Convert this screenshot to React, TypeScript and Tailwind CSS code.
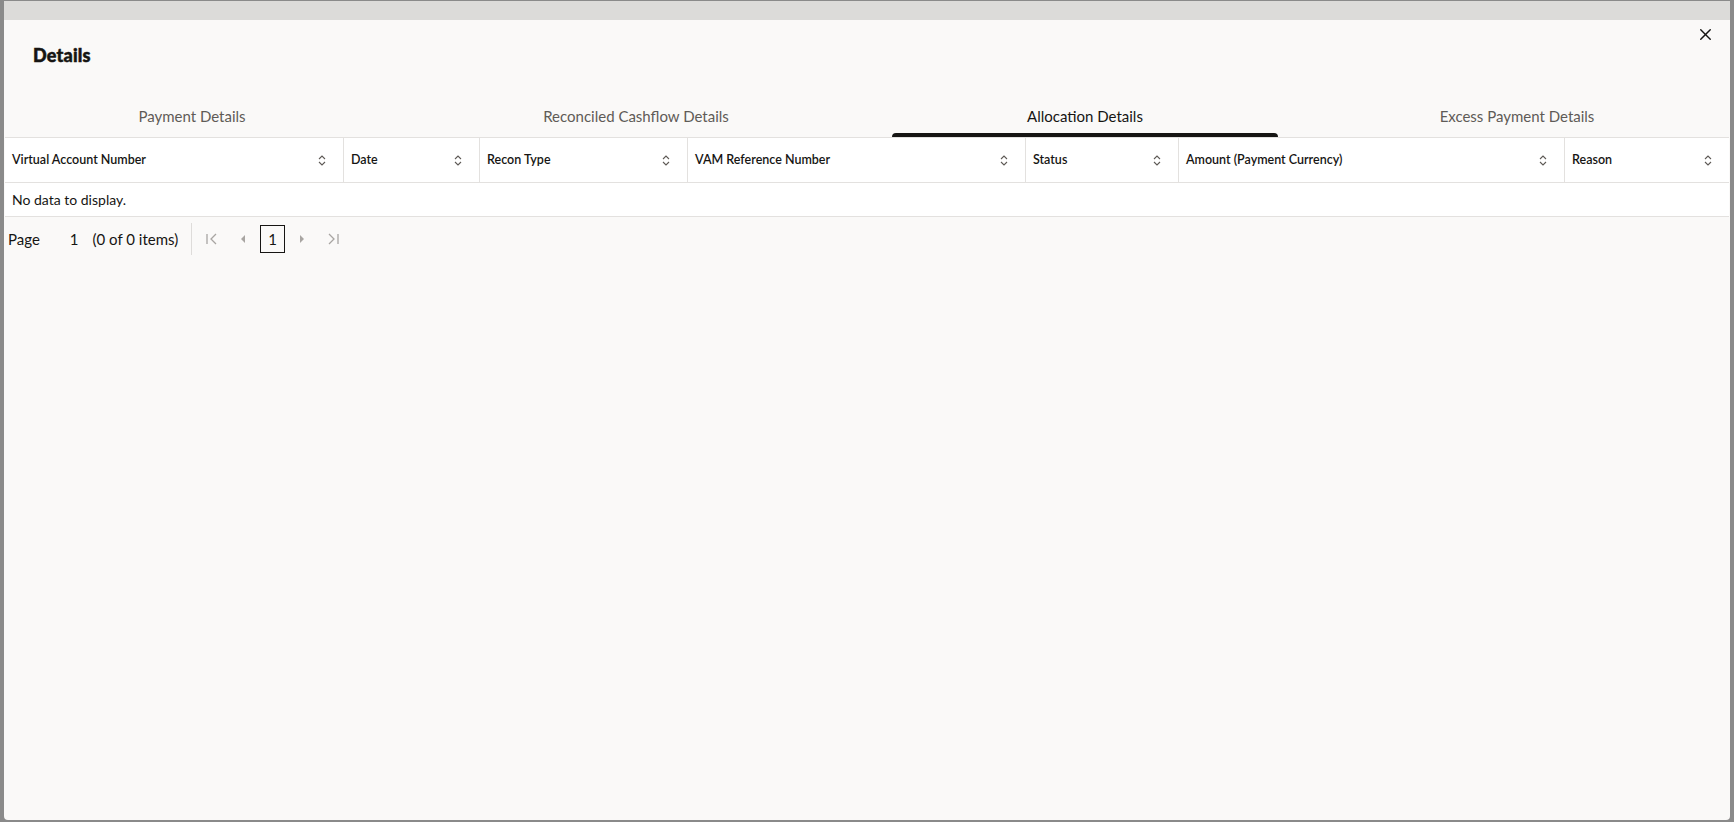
import { X } from "lucide-react";

const tabs = [
	{ label: "Payment Details", width: "w-[376px]", active: false },
	{ label: "Reconciled Cashflow Details", width: "w-[512px]", active: false },
	{ label: "Allocation Details", width: "w-[386px]", active: true },
	{ label: "Excess Payment Details", width: "w-[478px]", active: false },
];

const columns = [
	{ label: "Virtual Account Number", width: "w-[339px]" },
	{ label: "Date", width: "w-[136px]" },
	{ label: "Recon Type", width: "w-[208px]" },
	{ label: "VAM Reference Number", width: "w-[338px]" },
	{ label: "Status", width: "w-[153px]" },
	{ label: "Amount (Payment Currency)", width: "w-[386px]" },
	{ label: "Reason", width: "flex-1" },
];

function SortIcon() {
	return (
		<svg width="8" height="11" viewBox="0 0 8 11" fill="none" className="shrink-0">
			<path d="M1 4 L4 1 L7 4" stroke="#5f5b57" strokeWidth="1.1" />
			<path d="M1 7 L4 10 L7 7" stroke="#5f5b57" strokeWidth="1.1" />
		</svg>
	);
}

function Pager() {
	return (
		<div className="flex h-[44px] items-center text-[15px] text-[#161513]">
			<span className="ml-[4px]">Page</span>
			<span className="ml-[30px]">1</span>
			<span className="ml-[14px]">(0 of 0 items)</span>
			<span className="ml-[13px] h-[32px] w-px bg-[#dedcda]" />
			<div className="ml-[13px] flex items-center">
				<svg width="14" height="14" viewBox="0 0 14 14" fill="none">
					<path d="M2 2 V12" stroke="#a8a5a2" strokeWidth="1.3" />
					<path d="M11 2 L6 7 L11 12" stroke="#a8a5a2" strokeWidth="1.3" />
				</svg>
				<svg width="12" height="12" viewBox="0 0 12 12" className="ml-[18px]">
					<path d="M8 2 L4 6 L8 10 Z" fill="#a8a5a2" />
				</svg>
				<span className="ml-[11px] flex h-[28px] w-[25px] items-center justify-center border border-[#161513] text-[15px]">
					1
				</span>
				<svg width="12" height="12" viewBox="0 0 12 12" className="ml-[11px]">
					<path d="M4 2 L8 6 L4 10 Z" fill="#a8a5a2" />
				</svg>
				<svg width="14" height="14" viewBox="0 0 14 14" fill="none" className="ml-[18px]">
					<path d="M3 2 L8 7 L3 12" stroke="#a8a5a2" strokeWidth="1.3" />
					<path d="M12 2 V12" stroke="#a8a5a2" strokeWidth="1.3" />
				</svg>
			</div>
		</div>
	);
}

export default function App() {
	return (
		<div
			className="flex h-[822px] w-[1734px] flex-col overflow-hidden bg-[#8a8a8a] px-[4px] pb-[2px] pt-px"
			style={{ fontFamily: "Lato, 'Noto Sans', sans-serif" }}
		>
			<div className="h-[19px] shrink-0 bg-[#dcdbd9]" />
			<div className="relative flex flex-1 flex-col overflow-hidden rounded-b-[4px] bg-[#faf9f8]">
				<button className="absolute right-[15px] top-[5px] text-[#161513]">
					<X size={19} strokeWidth={1.8} />
				</button>
				<div className="h-[78px] shrink-0 pl-[29px] pt-[22px]">
					<h1 className="text-[18px] font-black tracking-[0.2px] text-[#161513] [-webkit-text-stroke:0.5px_#161513]">
						Details
					</h1>
				</div>
				<div className="flex h-[39px] shrink-0">
					{tabs.map((tab) => (
						<div
							key={tab.label}
							className={`relative flex shrink-0 items-start justify-center pt-[7px] text-[15px] ${tab.width} ${
								tab.active ? "text-[#161513]" : "text-[#5f5b57]"
							}`}
						>
							{tab.label}
							{tab.active && (
								<span className="absolute bottom-0 left-0 right-0 h-[4px] rounded-t-[4px] bg-[#161513]" />
							)}
						</div>
					))}
				</div>
				<div className="mx-px border-t border-[#e3e1df] bg-white">
					<div className="flex h-[45px] border-b border-[#e3e1df]">
						{columns.map((col, i) => (
							<div
								key={col.label}
								className={`flex items-center justify-between pl-[7px] pr-[17px] text-[12.5px] font-semibold text-[#161513] ${col.width} ${
									i < columns.length - 1 ? "shrink-0 border-r border-[#e3e1df]" : ""
								}`}
							>
								<span>{col.label}</span>
								<SortIcon />
							</div>
						))}
					</div>
					<div className="flex h-[34px] items-center border-b border-[#e3e1df] pl-[7px] text-[14px] text-[#161513]">
						No data to display.
					</div>
				</div>
				<Pager />
			</div>
		</div>
	);
}
